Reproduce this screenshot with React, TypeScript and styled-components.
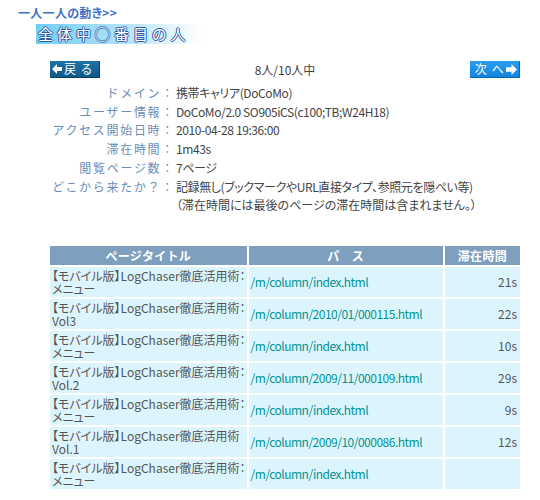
import React from 'react';
import styled, { createGlobalStyle } from 'styled-components';

const GlobalStyle = createGlobalStyle`
  body {
    margin: 0;
    background: #ffffff;
    font-family: "Noto Sans CJK JP", "Noto Sans", sans-serif;
    font-feature-settings: "palt";
    color: #555555;
  }
`;

const Page = styled.div`
  width: 540px;
  padding-top: 6px;
`;

const Crumb = styled.div`
  margin-left: 18px;
  font-size: 12px;
  font-weight: bold;
  line-height: 14px;
  color: #4270c6;
  letter-spacing: 0.3px;
`;

const Banner = styled.div`
  margin: 4px 0 0 36px;
  width: 165px;
  height: 20px;
  padding-left: 2px;
  box-sizing: border-box;
  background: linear-gradient(to right, #72cdf3 0%, #b4e4f8 55%, #ffffff 100%);
  font-size: 15px;
  line-height: 20px;
  letter-spacing: 4px;
  white-space: nowrap;
  color: #ffffff;
  text-shadow: 1px 0 0 #2c5aa6, -1px 0 0 #2c5aa6, 0 1px 0 #2c5aa6, 0 -1px 0 #2c5aa6;
`;

const Content = styled.div`
  margin-left: 50px;
  width: 470px;
`;

const NavBar = styled.div`
  display: flex;
  align-items: center;
  justify-content: space-between;
  margin-top: 17px;
  height: 17px;
`;

const NavButton = styled.a<{ $variant: 'back' | 'next' }>`
  display: flex;
  align-items: center;
  gap: 2px;
  width: 50px;
  height: 17px;
  box-sizing: border-box;
  padding: 0 2px;
  justify-content: ${p => (p.$variant === 'back' ? 'flex-start' : 'flex-end')};
  background: ${p =>
    p.$variant === 'back'
      ? 'linear-gradient(#1d72a6, #0f5a8a)'
      : 'linear-gradient(#2b9cf0, #1485dc)'};
  border-right: 1px solid ${p => (p.$variant === 'back' ? '#08405f' : '#0d66ad')};
  border-bottom: 1px solid ${p => (p.$variant === 'back' ? '#08405f' : '#0d66ad')};
  color: #ffffff;
  font-size: 12px;
  line-height: 1;
  text-decoration: none;
  white-space: nowrap;
  cursor: pointer;
`;

const ButtonLabel = styled.span`
  display: flex;
  gap: 5px;
`;

const Counter = styled.div`
  font-size: 12px;
  color: #444444;
`;

const InfoList = styled.dl`
  display: grid;
  grid-template-columns: 125px 1fr;
  margin: 6px 0 0 0;
  font-size: 12px;
  line-height: 18.7px;
`;

const InfoLabel = styled.dt`
  text-align: right;
  color: #6a8db8;
  font-feature-settings: normal;
  letter-spacing: 1.7px;
  white-space: nowrap;
`;

const InfoValue = styled.dd`
  margin: 0 0 0 1px;
  color: #444444;
  letter-spacing: -0.4px;
  white-space: nowrap;
`;

const Note = styled(InfoValue)`
  grid-column: 2;
  letter-spacing: 0;
`;

const Table = styled.table`
  margin: 29px 0 0 -2px;
  width: 474px;
  border-collapse: separate;
  border-spacing: 2px;
  font-size: 12px;
`;

const HeadCell = styled.th<{ $width: number }>`
  width: ${p => p.$width}px;
  height: 19px;
  padding: 0;
  background: #7f9fbf;
  color: #ffffff;
  font-weight: bold;
  font-feature-settings: normal;
  line-height: 19px;
  text-align: center;
  letter-spacing: 0.3px;
`;

const Cell = styled.td<{ $align?: 'left' | 'right' }>`
  height: 30px;
  padding: 0 ${p => (p.$align === 'right' ? '3px' : '1px')} 0 2px;
  background: #dcf5fd;
  line-height: 13px;
  vertical-align: middle;
  text-align: ${p => p.$align ?? 'left'};
  white-space: nowrap;
  color: #555555;
`;

const PathLink = styled.a`
  color: #009494;
  letter-spacing: -0.5px;
  text-decoration: none;
`;

const ArrowLeft = () => (
  <svg width="10" height="10" viewBox="0 0 10 10">
    <path d="M0 5 L5 0 L5 3 L10 3 L10 7 L5 7 L5 10 Z" fill="#ffffff" />
  </svg>
);

const ArrowRight = () => (
  <svg width="11" height="11" viewBox="0 0 10 10">
    <path d="M10 5 L5 0 L5 3 L0 3 L0 7 L5 7 L5 10 Z" fill="#ffffff" />
  </svg>
);

const info = [
  { label: 'ドメイン：', value: '携帯キャリア(DoCoMo)' },
  { label: 'ユーザー情報：', value: 'DoCoMo/2.0 SO905iCS(c100;TB;W24H18)' },
  { label: 'アクセス開始日時：', value: '2010-04-28 19:36:00' },
  { label: '滞在時間：', value: '1m43s' },
  { label: '閲覧ページ数：', value: '7ページ' },
  { label: 'どこから来たか？：', value: '記録無し(ブックマークやURL直接タイプ、参照元を隠ぺい等)' },
];

const pages = [
  { title: ['【モバイル版】LogChaser徹底活用術：', 'メニュー'], path: '/m/column/index.html', time: '21s' },
  { title: ['【モバイル版】LogChaser徹底活用術：', 'Vol3'], path: '/m/column/2010/01/000115.html', time: '22s' },
  { title: ['【モバイル版】LogChaser徹底活用術：', 'メニュー'], path: '/m/column/index.html', time: '10s' },
  { title: ['【モバイル版】LogChaser徹底活用術：', 'Vol.2'], path: '/m/column/2009/11/000109.html', time: '29s' },
  { title: ['【モバイル版】LogChaser徹底活用術：', 'メニュー'], path: '/m/column/index.html', time: '9s' },
  { title: ['【モバイル版】LogChaser徹底活用術', 'Vol.1'], path: '/m/column/2009/10/000086.html', time: '12s' },
  { title: ['【モバイル版】LogChaser徹底活用術：', 'メニュー'], path: '/m/column/index.html', time: '' },
];

export default function App() {
  return (
    <Page>
      <GlobalStyle />
      <Crumb>一人一人の動き&gt;&gt;</Crumb>
      <Banner>全体中◯番目の人</Banner>

      <Content>
        <NavBar>
          <NavButton $variant="back">
            <ArrowLeft />
            <ButtonLabel>
              <span>戻</span>
              <span>る</span>
            </ButtonLabel>
          </NavButton>
          <Counter>8人/10人中</Counter>
          <NavButton $variant="next">
            <ButtonLabel>
              <span>次</span>
              <span>へ</span>
            </ButtonLabel>
            <ArrowRight />
          </NavButton>
        </NavBar>

        <InfoList>
          {info.map(row => (
            <React.Fragment key={row.label}>
              <InfoLabel>{row.label}</InfoLabel>
              <InfoValue>{row.value}</InfoValue>
            </React.Fragment>
          ))}
          <Note>（滞在時間には最後のページの滞在時間は含まれません。）</Note>
        </InfoList>

        <Table>
          <thead>
            <tr>
              <HeadCell $width={194}>ページタイトル</HeadCell>
              <HeadCell $width={195}>パ　ス</HeadCell>
              <HeadCell $width={77}>滞在時間</HeadCell>
            </tr>
          </thead>
          <tbody>
            {pages.map((p, i) => (
              <tr key={i}>
                <Cell>
                  {p.title[0]}
                  <br />
                  {p.title[1]}
                </Cell>
                <Cell>
                  <PathLink href="#">{p.path}</PathLink>
                </Cell>
                <Cell $align="right">{p.time}</Cell>
              </tr>
            ))}
          </tbody>
        </Table>
      </Content>
    </Page>
  );
}
